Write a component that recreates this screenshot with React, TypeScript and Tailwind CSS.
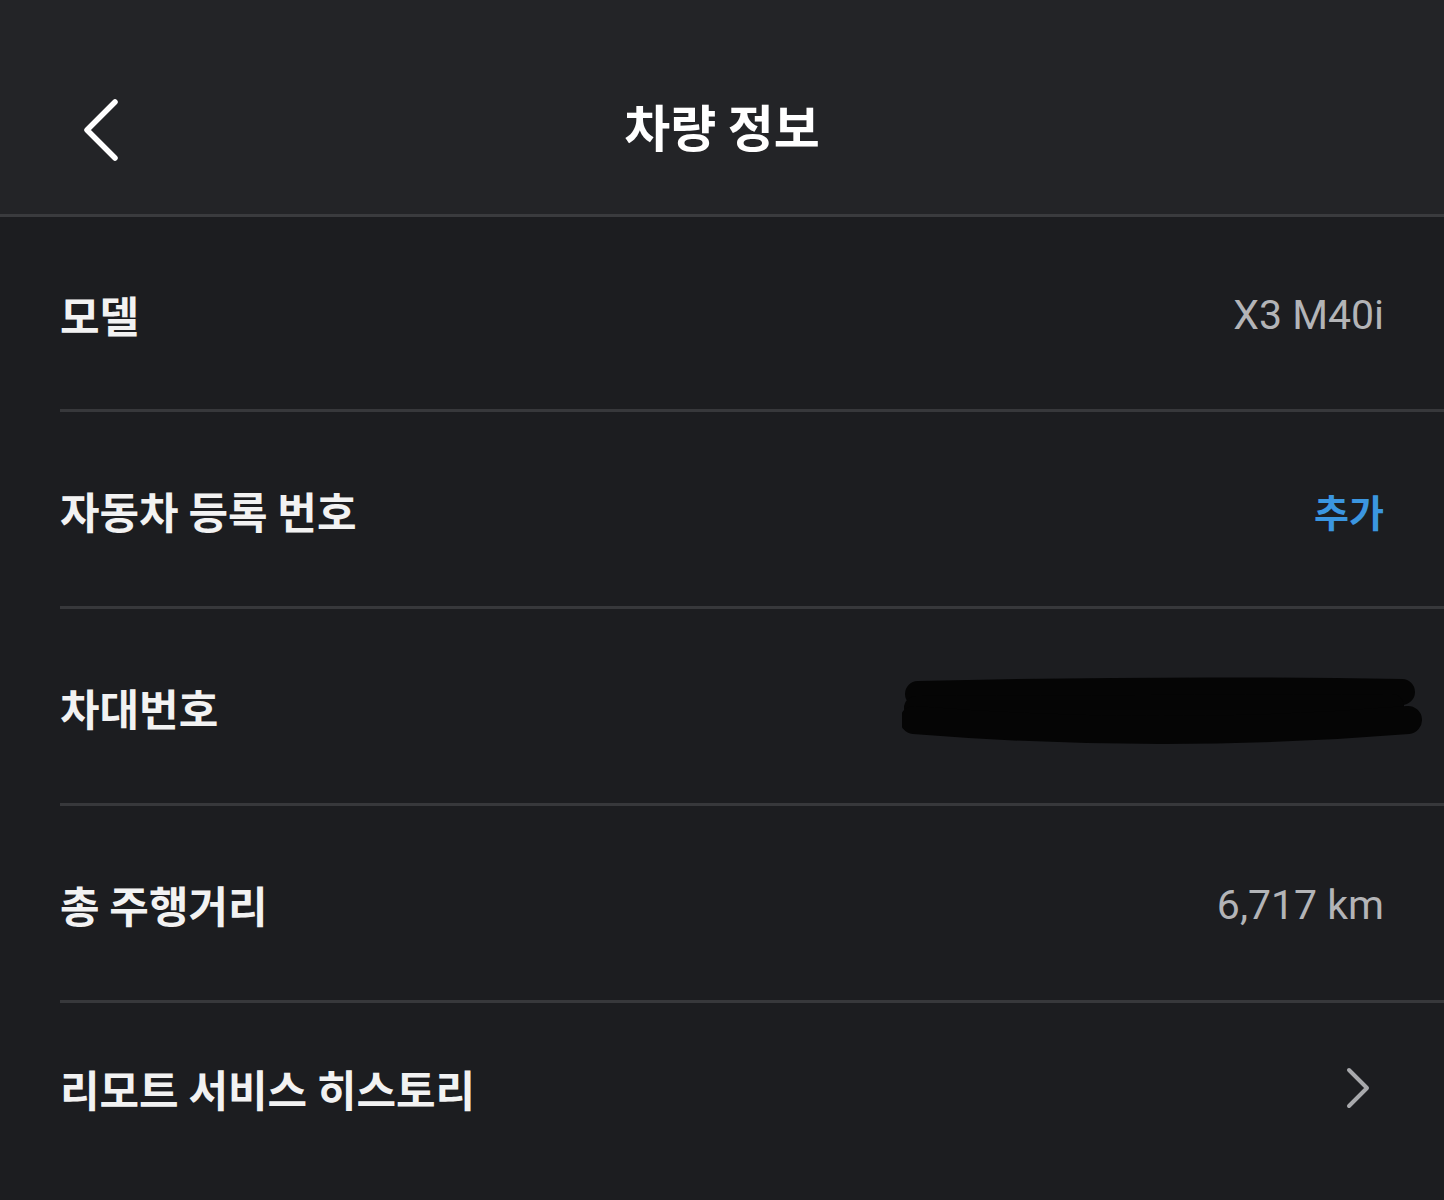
const rows = [
  { label: "모델", kind: "text", value: "X3 M40i" },
  { label: "자동차 등록 번호", kind: "link", value: "추가" },
  { label: "차대번호", kind: "hidden", value: "" },
  { label: "총 주행거리", kind: "text", value: "6,717 km" },
];

const korean = { fontFamily: '"Noto Sans CJK KR", "Noto Sans", sans-serif' };
const latin = { fontFamily: 'Roboto, "Noto Sans", sans-serif' };

const Scribble = () => (
  <svg width="520" height="68" viewBox="0 0 520 68" className="-mr-[38px] block">
    <g fill="none" stroke="#050505" strokeLinecap="round">
      <path d="M16 18 Q 260 12 500 16" strokeWidth="26" />
      <path d="M14 32 L 490 30" strokeWidth="24" />
      <path d="M12 44 Q 260 64 506 44" strokeWidth="28" />
    </g>
  </svg>
);

export default function App() {
  return (
    <div className="min-h-[1200px] w-full bg-[#1c1d20] text-[#f2f2f2]" style={korean}>
      <header className="grid h-[217px] grid-cols-[1fr_auto_1fr] items-start border-b-[3px] border-[#3a3b3e] bg-[#232427]">
        <div className="pl-[80px] pt-[96px]">
          <svg width="44" height="66" viewBox="0 0 44 66" className="block">
            <path
              d="M35 6 L 7 34 L 35 62"
              fill="none"
              stroke="#ffffff"
              strokeWidth="5.5"
              strokeLinecap="round"
              strokeLinejoin="round"
            />
          </svg>
        </div>
        <h1 className="pt-[100px] text-[50px] font-bold leading-none text-white">차량 정보</h1>
        <div />
      </header>

      <main className="pl-[60px]">
        {rows.map((row, i) => (
          <div
            key={row.label}
            className={`flex items-center justify-between border-b-[3px] border-[#37383b] pr-[60px] ${
              i === 0 ? "h-[195px]" : "h-[197px]"
            }`}
          >
            <span className="pt-[2px] text-[43px] font-bold leading-none">{row.label}</span>
            {row.kind === "text" && (
              <span className="pt-[4px] text-[41px] leading-none text-[#b3b4b7]" style={latin}>
                {row.value}
              </span>
            )}
            {row.kind === "link" && (
              <span className="pt-[4px] text-[38px] font-bold leading-none text-[#3b96e0]">{row.value}</span>
            )}
            {row.kind === "hidden" && (
              <div className="pt-[8px]">
                <Scribble />
              </div>
            )}
          </div>
        ))}
        <div className="flex h-[170px] items-center justify-between pr-[72px]">
          <span className="text-[43px] font-bold leading-none">리모트 서비스 히스토리</span>
          <svg width="28" height="44" viewBox="0 0 28 44" className="block">
            <path
              d="M5 4 L 23 22 L 5 40"
              fill="none"
              stroke="#a8a9ac"
              strokeWidth="4"
              strokeLinecap="round"
              strokeLinejoin="round"
            />
          </svg>
        </div>
      </main>
    </div>
  );
}
